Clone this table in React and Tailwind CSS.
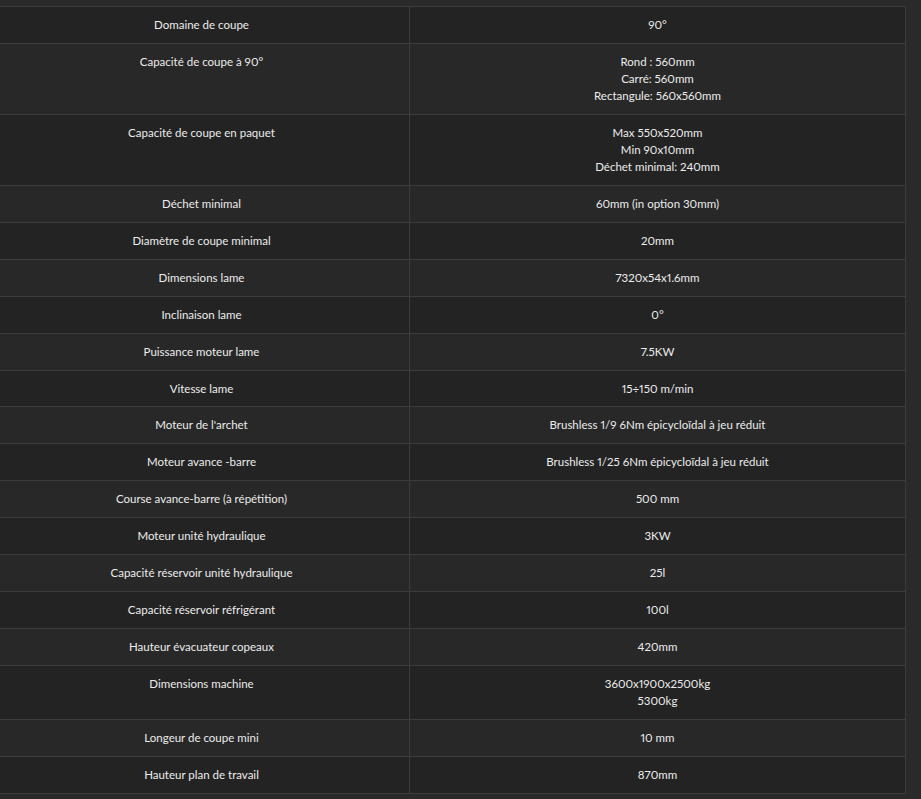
const specs = [
  ['Domaine de coupe', ['90°']],
  ['Capacité de coupe à 90°', ['Rond : 560mm', 'Carré: 560mm', 'Rectangule: 560x560mm']],
  ['Capacité de coupe en paquet', ['Max 550x520mm', 'Min 90x10mm', 'Déchet minimal: 240mm']],
  ['Déchet minimal', ['60mm (in option 30mm)']],
  ['Diamètre de coupe minimal', ['20mm']],
  ['Dimensions lame', ['7320x54x1.6mm']],
  ['Inclinaison lame', ['0°']],
  ['Puissance moteur lame', ['7.5KW']],
  ['Vitesse lame', ['15÷150 m/min']],
  ["Moteur de l'archet", ['Brushless 1/9 6Nm épicycloïdal à jeu réduit']],
  ['Moteur avance -barre', ['Brushless 1/25 6Nm épicycloïdal à jeu réduit']],
  ['Course avance-barre (à répétition)', ['500 mm']],
  ['Moteur unité hydraulique', ['3KW']],
  ['Capacité réservoir unité hydraulique', ['25l']],
  ['Capacité réservoir réfrigérant', ['100l']],
  ['Hauteur évacuateur copeaux', ['420mm']],
  ['Dimensions machine', ['3600x1900x2500kg', '5300kg']],
  ['Longeur de coupe mini', ['10 mm']],
  ['Hauteur plan de travail', ['870mm']],
];

export default function App() {
  return (
    <div className="min-h-screen bg-[#2a2a2a] pt-[6px] overflow-hidden font-['Lato','Open_Sans',sans-serif] text-[11.5px] leading-[17px] text-[#ececec] proportional-nums">
      <div className="ml-[-7px] w-[913px] border border-[#3c3c3c] flex flex-col">
        {specs.map(([label, values], i) => (
          <div
            key={label}
            className={`flex border-b border-[#3c3c3c] last:border-b-0 ${i % 2 === 0 ? 'bg-[#232323]' : 'bg-[#282828]'}`}
          >
            <div className="w-[416px] shrink-0 border-r border-[#3c3c3c] pt-[9px] pb-[9.95px] px-2 text-center">
              {label}
            </div>
            <div className="flex-1 pt-[9px] pb-[9.95px] px-2 text-center">
              {values.map((v) => (
                <div key={v}>{v}</div>
              ))}
            </div>
          </div>
        ))}
      </div>
    </div>
  );
}
